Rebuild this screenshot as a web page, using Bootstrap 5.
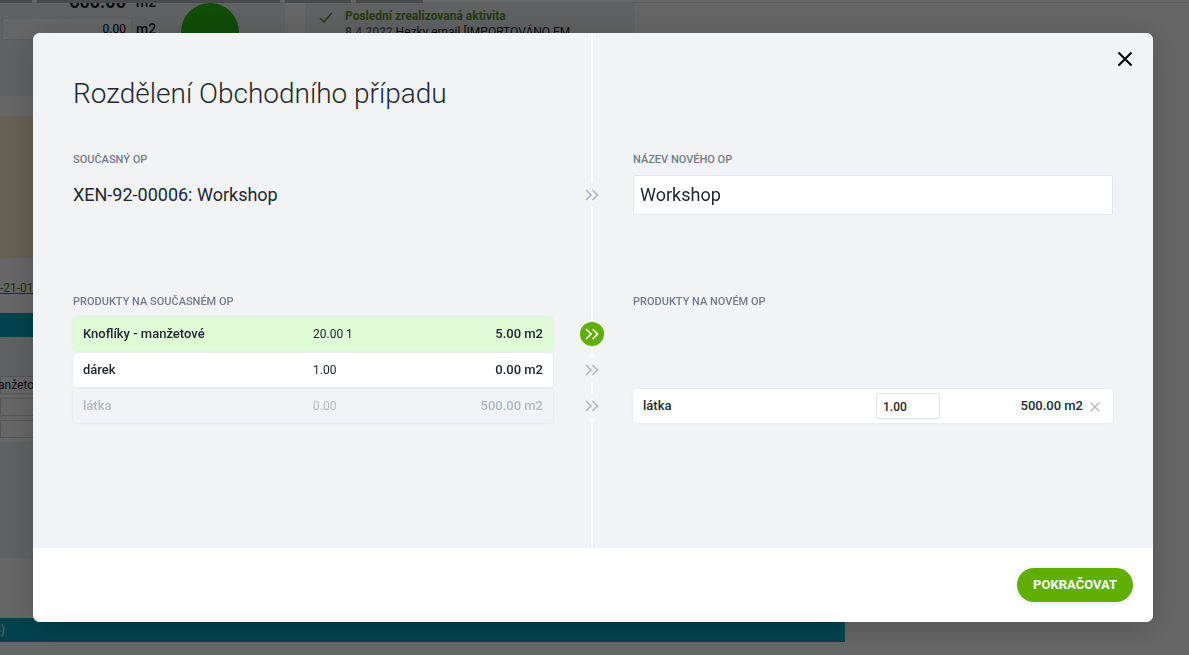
<!DOCTYPE html>
<html lang="cs">
<head>
<meta charset="utf-8">
<meta name="viewport" content="width=device-width, initial-scale=1">
<title>Rozdělení Obchodního případu</title>
<link href="https://cdn.jsdelivr.net/npm/bootstrap@5.3.0/dist/css/bootstrap.min.css" rel="stylesheet">
<style>
  body { font-family: Roboto, sans-serif; font-size: 12px; line-height: 16px; color: #212832; overflow: hidden; }

  /* CRM page behind the dialog */
  .crm-page { height: 100vh; }
  .tab-strip { height: 3px; gap: 5px; border-bottom: 1px solid #eaeaea; }
  .tab-strip span { height: 3px; background: #b4b8bc; }
  .tab-a { width: 32px; } .tab-b { width: 243px; } .tab-c { width: 66px; } .tab-d { width: 67px; }
  .top-panels { height: 93px; gap: 20px; }
  .panel-tint { background: #f0f3f5; }
  .sum-panel { width: 285px; gap: 24px; }
  .act-panel { width: 330px; padding: 5px 14px; gap: 12px; }
  .sum-grid { width: 157px; padding-left: 2px; }
  .sum-line { gap: 4px; font-size: 14px; font-weight: 500; }
  .sum-total { width: 130px; padding-right: 6px; text-align: right; font-size: 18px; font-weight: 700; }
  .sum-line.is-top { margin-top: -9px; }
  .sum-input { width: 130px; height: 22px; font-size: 12px; border: 1px solid #e4e7ea; padding: 0 5px; }
  .pie { width: 58px; height: 58px; background: #2cbe14; }
  .green-text { color: #5b8f28; }
  .work-area { width: 845px; }
  .note-box { height: 142px; background: #fff2cf; }
  .link-line { padding: 22px 0 17px; }
  .link-line a { color: #567a22; }
  .teal-bar { height: 24px; background: #00a9c2; }
  .teal-bar.is-heading { margin-top: 60px; color: #fff; font-size: 12px; line-height: 24px; text-indent: -6px; }
  .head-row { height: 39px; }
  .thin-box { height: 18px; border: 1px solid #d5d5d5; text-indent: -3px; }
  .lower-panel { height: 116px; margin-top: 4px; }

  /* Dialog */
  .modal-backdrop { --bs-backdrop-opacity: .6; }
  .split-modal .modal-dialog { max-width: none; margin: 33px 36px 33px 33px; }
  .split-modal .modal-content { border: 0; border-radius: 7px; overflow: hidden; color: #212832; box-shadow: 0 4px 32px rgba(0, 0, 0, .2); }
  .split-body { padding: 40px 40px 123px; background: linear-gradient(#fff, #fff) calc(50% - 1px) 0 / 2px 100% no-repeat #f1f3f5; }
  .split-title { font-size: 28px; line-height: 42px; font-weight: 300; margin: 0 0 37px; }
  .split-grid { display: grid; grid-template-columns: minmax(0, 1fr) 80px minmax(0, 1fr); }
  .cap { font-size: 11px; line-height: 16px; font-weight: 500; color: #717c8c; text-transform: uppercase; margin: 0; }
  .deal-row { margin-top: 7px; margin-bottom: 79px; }
  .deal-name { font-size: 18px; line-height: 40px; margin: 0; }
  .deal-input { height: 40px; font-size: 18px; padding: 0 6px 2px; border: 1px solid #e2e5e9; border-radius: 2px; color: #212832; }
  .arrow-col { padding-right: 2px; }
  .arrow-btn { width: 24px; height: 24px; padding: 0; border: 0; border-radius: 50%; background: #f1f3f5; color: #b0b7c2; display: grid; place-items: center; }
  .arrow-btn.is-on { background: #5fae00; color: #fff; }
  .arrow-list { gap: 12px; padding-top: 12px; padding-bottom: 6px; }

  .goods { width: 100%; table-layout: fixed; border-collapse: separate; border-spacing: 0 2px; margin-top: 5px; }
  .goods td { height: 34px; padding: 0; background: #fff; vertical-align: middle; }
  .goods td:first-child { padding-left: 10px; border-radius: 4px 0 0 4px; }
  .goods td:last-child { padding-right: 10px; border-radius: 0 4px 4px 0; text-align: right; }
  .goods tr { border-radius: 4px; box-shadow: 0 0 3px rgba(30, 40, 60, .08); }
  .goods .strong-cell { font-size: 13px; font-weight: 500; }
  .goods .is-picked td { background: #defbd5; }
  .goods .is-spent td { background: #f1f3f5; color: #b0b9c3; }
  .goods .is-free { box-shadow: none; }
  .goods .is-free td { background: transparent; }
  .goods .edit-cell { padding-left: 3px; }
  .goods .is-editable td:last-child { padding-right: 12px; }
  .col-half { width: 50%; }
  .qty-input { width: 64px; height: 26px; font-size: 12px; font-weight: 500; padding: 2px 6px 0; border: 1px solid #dfe3e7; border-radius: 2px; color: #212832; }
  .drop-btn { width: 12px; height: 12px; padding: 0; margin-left: 6px; border: 0; background: none; color: #b3b9c1; line-height: 0; vertical-align: middle; }
  .drop-btn svg { display: block; }
  .close-btn { top: 18px; right: 20px; width: 16px; height: 16px; padding: 0; border: 0; background: none; line-height: 0; color: #000; }
  .split-foot { padding: 20px; background: #fff; }
  .go-btn { --bs-btn-color: #fff; --bs-btn-bg: #5fae00; --bs-btn-hover-bg: #549a00; --bs-btn-hover-color: #fff; height: 34px; padding: 0 16px; font-size: 13px; line-height: 34px; font-weight: 700; border: 0; box-shadow: 0 1px 5px rgba(0, 0, 0, .12); }
</style>
</head>
<body class="modal-open">

<main class="crm-page overflow-hidden bg-white" aria-hidden="true">
  <div class="tab-strip d-flex position-relative z-1"><span class="tab-a"></span><span class="tab-b"></span><span class="tab-c"></span><span class="tab-d"></span></div>
  <div class="top-panels d-flex">
    <section class="sum-panel panel-tint d-flex overflow-hidden">
      <div class="sum-grid">
        <div class="sum-line is-top d-flex align-items-center"><span class="sum-total">600.00</span><span>m2</span></div>
        <div class="sum-line d-flex align-items-center mt-2">
          <input class="sum-input text-end bg-white" type="text" value="0.00" aria-label="Množství" tabindex="-1">
          <span>m2</span>
        </div>
      </div>
      <div class="pie rounded-circle"></div>
    </section>
    <section class="act-panel panel-tint d-flex">
      <svg class="mt-1" width="14" height="12" viewBox="0 0 14 12" fill="none" stroke="#5b8f28" stroke-width="1.6"><path d="M1 6l4 4 8-9"/></svg>
      <div>
        <div class="green-text fw-bold">Poslední zrealizovaná aktivita</div>
        <div><span class="text-secondary fw-medium">8.4.2022</span> Hezky email [IMPORTOVÁNO EM</div>
      </div>
    </section>
  </div>
  <div class="work-area">
    <div class="pt-1"><div class="note-box mt-3"></div></div>
    <div class="link-line"><a href="#" tabindex="-1">-21-01</a></div>
    <div class="teal-bar"></div>
    <div class="head-row panel-tint"></div>
    <div class="thin-box text-nowrap">anžetové</div>
    <div class="thin-box mt-1"></div>
    <div class="thin-box mt-1"></div>
    <div class="lower-panel panel-tint"></div>
    <div class="teal-bar is-heading">4)</div>
  </div>
</main>

<div class="modal-backdrop show"></div>

<div class="modal split-modal d-block" role="dialog" aria-modal="true" aria-labelledby="splitTitle">
  <div class="modal-dialog">
    <form class="modal-content">
      <button class="close-btn position-absolute" type="button" aria-label="Zavřít">
        <svg width="16" height="16" viewBox="0 0 16 16" fill="none" stroke="currentColor" stroke-width="2"><path d="M1.500 1.500l13 13M14.500 1.500l-13 13"/></svg>
      </button>
      <div class="split-body">
        <h1 class="split-title" id="splitTitle">Rozdělení Obchodního případu</h1>

        <div class="split-grid">
          <h2 class="cap">Současný OP</h2><span></span>
          <label class="cap" for="newName">Název nového OP</label>
        </div>
        <div class="split-grid deal-row align-items-center">
          <p class="deal-name">XEN-92-00006: Workshop</p>
          <div class="arrow-col d-flex justify-content-center"><span class="arrow-btn"><svg width="14" height="12" viewBox="0 0 14 12" fill="none" stroke="currentColor" stroke-width="1.700"><path d="M1 1l5 5-5 5M7.500 1l5 5-5 5"/></svg></span></div>
          <input class="deal-input w-100 bg-white" id="newName" type="text" value="Workshop">
        </div>

        <div class="split-grid">
          <h2 class="cap">Produkty na současném OP</h2><span></span>
          <h2 class="cap">Produkty na novém OP</h2>
        </div>
        <div class="split-grid">
          <table class="goods">
            <colgroup><col class="col-half"><col><col></colgroup>
            <tbody>
              <tr class="is-picked"><td class="strong-cell">Knoflíky - manžetové</td><td>20.00 1</td><td class="strong-cell">5.00 m2</td></tr>
              <tr><td class="strong-cell">dárek</td><td>1.00</td><td class="strong-cell">0.00 m2</td></tr>
              <tr class="is-spent"><td class="strong-cell">látka</td><td>0.00</td><td class="strong-cell">500.00 m2</td></tr>
            </tbody>
          </table>
          <div class="arrow-col arrow-list d-flex flex-column align-items-center">
            <button class="arrow-btn is-on" type="button" aria-label="Přesunout Knoflíky - manžetové"><svg width="14" height="12" viewBox="0 0 14 12" fill="none" stroke="currentColor" stroke-width="1.700"><path d="M1 1l5 5-5 5M7.500 1l5 5-5 5"/></svg></button>
            <button class="arrow-btn" type="button" aria-label="Přesunout dárek"><svg width="14" height="12" viewBox="0 0 14 12" fill="none" stroke="currentColor" stroke-width="1.700"><path d="M1 1l5 5-5 5M7.500 1l5 5-5 5"/></svg></button>
            <button class="arrow-btn" type="button" aria-label="Přesunout látka"><svg width="14" height="12" viewBox="0 0 14 12" fill="none" stroke="currentColor" stroke-width="1.700"><path d="M1 1l5 5-5 5M7.500 1l5 5-5 5"/></svg></button>
          </div>
          <table class="goods">
            <colgroup><col class="col-half"><col><col></colgroup>
            <tbody>
              <tr class="is-free"><td colspan="3"></td></tr>
              <tr class="is-free"><td colspan="3"></td></tr>
              <tr class="is-editable">
                <td class="strong-cell">látka</td>
                <td class="edit-cell"><input class="qty-input bg-white" type="text" value="1.00" aria-label="Množství látka"></td>
                <td class="strong-cell">500.00 m2<button class="drop-btn" type="button" aria-label="Odebrat látka"><svg width="12" height="12" viewBox="0 0 12 12" fill="none" stroke="currentColor" stroke-width="1.300"><path d="M1.500 1.500l9 9M10.500 1.500l-9 9"/></svg></button></td>
              </tr>
            </tbody>
          </table>
        </div>
      </div>
      <div class="split-foot d-flex justify-content-end">
        <button class="btn go-btn rounded-pill" type="submit">POKRAČOVAT</button>
      </div>
    </form>
  </div>
</div>

<script src="https://cdn.jsdelivr.net/npm/bootstrap@5.3.0/dist/js/bootstrap.bundle.min.js"></script>
</body>
</html>
